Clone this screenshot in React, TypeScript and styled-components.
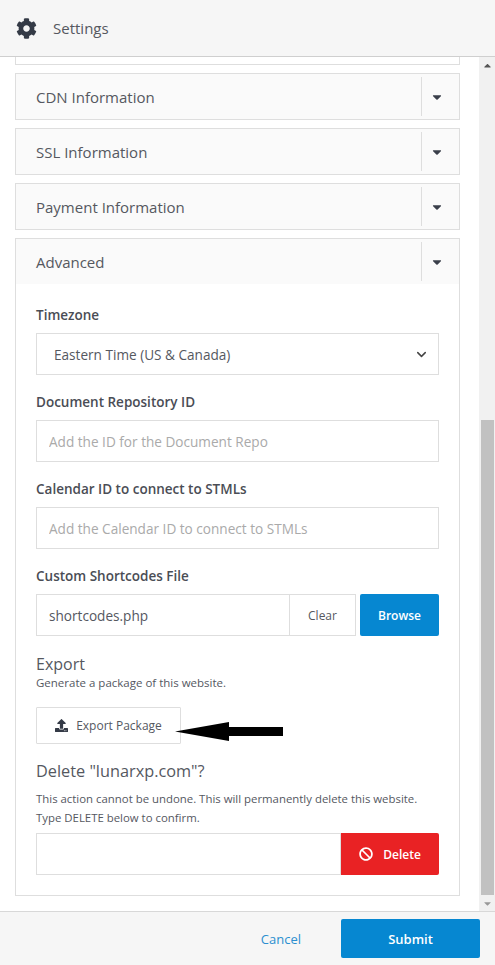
import styled, { createGlobalStyle } from "styled-components";
import { FaBan, FaCaretDown, FaCaretUp, FaCog, FaUpload } from "react-icons/fa";
import { LuChevronDown } from "react-icons/lu";

const collapsedSections = ["CDN Information", "SSL Information", "Payment Information"];

const App = () => {
  return (
    <Page>
      <GlobalStyle />
      <Header>
        <FaCog size={21} color="#343a46" />
        <HeaderTitle>{"Settings"}</HeaderTitle>
      </Header>
      <Middle>
        <Content>
          <PanelTail />
          {collapsedSections.map((title) => (
            <Panel key={title}>
              <PanelHead>
                <PanelTitle>{title}</PanelTitle>
                <CaretCell>
                  <FaCaretDown size={14} color="#3a3f4a" />
                </CaretCell>
              </PanelHead>
            </Panel>
          ))}
          <Panel>
            <PanelHead>
              <PanelTitle>{"Advanced"}</PanelTitle>
              <CaretCell>
                <FaCaretDown size={14} color="#3a3f4a" />
              </CaretCell>
            </PanelHead>
            <PanelBody>
              <Field>
                <FieldLabel>{"Timezone"}</FieldLabel>
                <SelectBox>
                  <span>{"Eastern Time (US & Canada)"}</span>
                  <LuChevronDown size={15} color="#444" strokeWidth={2.4} />
                </SelectBox>
              </Field>
              <Field>
                <FieldLabel>{"Document Repository ID"}</FieldLabel>
                <TextInput placeholder="Add the ID for the Document Repo" readOnly />
              </Field>
              <Field>
                <FieldLabel>{"Calendar ID to connect to STMLs"}</FieldLabel>
                <TextInput placeholder="Add the Calendar ID to connect to STMLs" readOnly />
              </Field>
              <Field>
                <FieldLabel>{"Custom Shortcodes File"}</FieldLabel>
                <InputRow>
                  <RowInput value="shortcodes.php" readOnly />
                  <ClearButton>{"Clear"}</ClearButton>
                  <BrowseButton>{"Browse"}</BrowseButton>
                </InputRow>
              </Field>
              <ExportHeading>{"Export"}</ExportHeading>
              <ExportHint>{"Generate a package of this website."}</ExportHint>
              <ExportRow>
                <ExportButton>
                  <FaUpload size={13} color="#343a46" />
                  {"Export Package"}
                </ExportButton>
                <Arrow width="108" height="19" viewBox="0 0 108 19">
                  <polygon points="0,9.5 54,0 54,5 108,5 108,14 54,14 54,19" fill="#000" />
                </Arrow>
              </ExportRow>
              <DeleteHeading>{'Delete "lunarxp.com"?'}</DeleteHeading>
              <DeleteHint>
                {"This action cannot be undone. This will permanently delete this website."}
                <br />
                {"Type DELETE below to confirm."}
              </DeleteHint>
              <InputRow>
                <RowInput readOnly />
                <DeleteButton>
                  <FaBan size={14} color="#fff" />
                  {"Delete"}
                </DeleteButton>
              </InputRow>
            </PanelBody>
          </Panel>
        </Content>
        <ScrollTrack>
          <ScrollArrow>
            <FaCaretUp size={11} color="#555" />
          </ScrollArrow>
          <ScrollThumb />
          <ScrollArrow>
            <FaCaretDown size={11} color="#999" />
          </ScrollArrow>
        </ScrollTrack>
      </Middle>
      <Footer>
        <CancelLink>{"Cancel"}</CancelLink>
        <SubmitButton>{"Submit"}</SubmitButton>
      </Footer>
    </Page>
  );
};

export default App;

const GlobalStyle = createGlobalStyle`
  html, body {
    margin: 0;
    padding: 0;
    background: #fff;
    font-family: "Open Sans", "Liberation Sans", sans-serif;
    overflow: hidden;
  }
  * {
    box-sizing: border-box;
  }
`;

const Page = styled.div`
  width: 495px;
  height: 965px;
  display: flex;
  flex-direction: column;
  color: #4a4d55;
`;

const Header = styled.header`
  height: 57px;
  flex-shrink: 0;
  display: flex;
  align-items: center;
  gap: 16px;
  padding: 0 16px 0;
  background: #f6f6f6;
  border-bottom: 1px solid #cfcfcf;
`;

const HeaderTitle = styled.h1`
  margin: 0;
  font-size: 15px;
  font-weight: 400;
  color: #55585f;
`;

const Middle = styled.div`
  flex: 1;
  min-height: 0;
  display: flex;
`;

const Content = styled.main`
  width: 479px;
  padding: 0 19px 0 15px;
  display: flex;
  flex-direction: column;
  gap: 8px;
`;

const PanelTail = styled.div`
  height: 8px;
  border: 1px solid #dedede;
  border-top: 0;
`;

const Panel = styled.section`
  border: 1px solid #dedede;
`;

const PanelHead = styled.div`
  height: 45px;
  display: flex;
  align-items: center;
  background: #fafafa;
`;

const PanelTitle = styled.h2`
  flex: 1;
  margin: 0;
  padding: 1px 0 0 20px;
  font-size: 15px;
  font-weight: 400;
  color: #55585f;
`;

const CaretCell = styled.div`
  width: 38px;
  height: 39px;
  display: flex;
  align-items: center;
  justify-content: center;
  padding-right: 8px;
  border-left: 1px solid #dedede;
`;

const PanelBody = styled.div`
  padding: 22px 20px 20px;
  display: flex;
  flex-direction: column;
`;

const Field = styled.div`
  display: flex;
  flex-direction: column;
  gap: 9px;
  margin-bottom: 18px;
`;

const FieldLabel = styled.label`
  font-size: 13.5px;
  line-height: 18px;
  font-weight: 600;
  color: #4a4d55;
`;

const SelectBox = styled.div`
  height: 42px;
  display: flex;
  align-items: center;
  justify-content: space-between;
  padding: 0 9px 0 17px;
  border: 1px solid #dedede;
  font-size: 13.6px;
  color: #55585f;
`;

const TextInput = styled.input`
  width: 100%;
  height: 42px;
  padding: 0 12px;
  border: 1px solid #dedede;
  border-radius: 0;
  outline: none;
  font-family: inherit;
  font-size: 13.6px;
  color: #55585f;
  background: #fff;
  &::placeholder {
    color: #aaa;
    opacity: 1;
  }
`;

const RowInput = styled(TextInput)`
  flex: 1;
  min-width: 0;
`;

const InputRow = styled.div`
  display: flex;
  height: 42px;
`;

const ClearButton = styled.button`
  width: 66px;
  flex-shrink: 0;
  margin-right: 4px;
  border: 1px solid #dedede;
  border-left: 0;
  background: #fff;
  font-family: inherit;
  font-size: 12px;
  color: #55585f;
`;

const BrowseButton = styled.button`
  width: 79px;
  flex-shrink: 0;
  border: 0;
  border-radius: 2px;
  background: #0687d1;
  font-family: inherit;
  font-size: 12px;
  font-weight: 600;
  color: #fff;
`;

const ExportHeading = styled.h3`
  margin: 0;
  font-size: 16px;
  line-height: 21px;
  font-weight: 400;
  color: #55585f;
`;

const ExportHint = styled.p`
  margin: 0;
  font-size: 11.5px;
  line-height: 15px;
  color: #55585f;
`;

const ExportRow = styled.div`
  position: relative;
  margin-top: 17px;
`;

const ExportButton = styled.button`
  width: 145px;
  height: 37px;
  display: flex;
  align-items: center;
  justify-content: center;
  gap: 8px;
  border: 1px solid #dedede;
  border-radius: 1px;
  background: #fff;
  font-family: inherit;
  font-size: 12px;
  color: #55585f;
`;

const Arrow = styled.svg`
  position: absolute;
  left: 139px;
  top: 15px;
`;

const DeleteHeading = styled.h3`
  margin: 15px 0 0;
  font-size: 16.3px;
  line-height: 24px;
  font-weight: 400;
  color: #55585f;
`;

const DeleteHint = styled.p`
  margin: 6px 0 6px;
  font-size: 11.4px;
  line-height: 19px;
  color: #55585f;
`;

const DeleteButton = styled.button`
  width: 98px;
  flex-shrink: 0;
  display: flex;
  align-items: center;
  justify-content: center;
  gap: 10px;
  border: 0;
  border-radius: 0 2px 2px 0;
  background: #e92224;
  font-family: inherit;
  font-size: 12px;
  font-weight: 600;
  color: #fff;
`;

const ScrollTrack = styled.div`
  width: 16px;
  display: flex;
  flex-direction: column;
  background: #f1f1f1;
`;

const ScrollArrow = styled.div`
  height: 16px;
  flex-shrink: 0;
  display: flex;
  align-items: center;
  justify-content: center;
`;

const ScrollThumb = styled.div`
  width: 13px;
  height: 475px;
  margin: auto 0 0 2px;
  background: #c1c1c1;
`;

const Footer = styled.footer`
  height: 54px;
  flex-shrink: 0;
  display: flex;
  align-items: center;
  justify-content: flex-end;
  gap: 40px;
  padding: 0 15px 0 0;
  background: #f6f6f6;
  border-top: 1px solid #d8d8d8;
`;

const CancelLink = styled.a`
  font-size: 13px;
  color: #2b8fd0;
`;

const SubmitButton = styled.button`
  width: 139px;
  height: 39px;
  border: 0;
  border-radius: 2px;
  background: #0687d1;
  font-family: inherit;
  font-size: 13px;
  font-weight: 600;
  color: #fff;
`;
